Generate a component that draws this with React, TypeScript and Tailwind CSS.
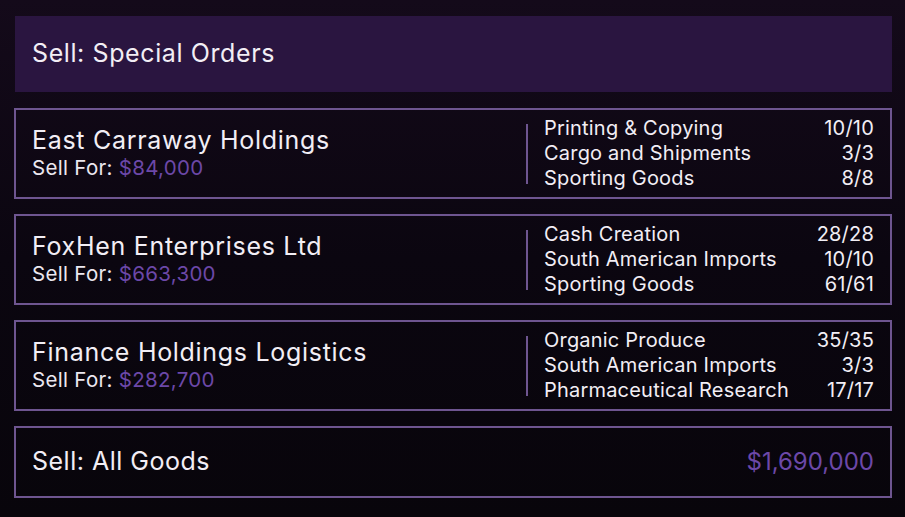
const orders = [
  {
    name: "East Carraway Holdings",
    price: "$84,000",
    goods: [
      ["Printing & Copying", "10/10"],
      ["Cargo and Shipments", "3/3"],
      ["Sporting Goods", "8/8"],
    ],
  },
  {
    name: "FoxHen Enterprises Ltd",
    price: "$663,300",
    goods: [
      ["Cash Creation", "28/28"],
      ["South American Imports", "10/10"],
      ["Sporting Goods", "61/61"],
    ],
  },
  {
    name: "Finance Holdings Logistics",
    price: "$282,700",
    goods: [
      ["Organic Produce", "35/35"],
      ["South American Imports", "3/3"],
      ["Pharmaceutical Research", "17/17"],
    ],
  },
];

function OrderCard({ name, price, goods }: { name: string; price: string; goods: string[][] }) {
  return (
    <div className="flex h-[91px] items-center border-2 border-[#6e5590] pl-[16px] pr-[16px]">
      <div className="flex-1">
        <div className="text-[25px] leading-[26px] tracking-[0.7px] text-[#f2eef5]">{name}</div>
        <div className="mt-[2px] text-[20.5px] leading-[25px] tracking-[0.3px] text-[#ece8f0]">
          Sell For: <span className="text-[#6c48a8]">{price}</span>
        </div>
      </div>
      <div className="h-[60px] w-[2px] bg-[#6e5590]" />
      <div className="ml-[16px] w-[330px]">
        {goods.map(([label, count]) => (
          <div key={label} className="flex justify-between text-[20px] leading-[25.3px] tracking-[0.2px] text-[#f2eef5]">
            <span>{label}</span>
            <span>{count}</span>
          </div>
        ))}
      </div>
    </div>
  );
}

export default function App() {
  return (
    <div
      className="h-[517px] w-[905px] overflow-hidden bg-gradient-to-b from-[#140a1a] via-[#0b0610] to-[#08050b] pl-[14px] pt-[16px]"
      style={{ fontFamily: "Inter, 'Liberation Sans', sans-serif" }}
    >
      <div className="w-[878px]">
        <div className="ml-px flex h-[76px] items-center bg-[#2a1540] pl-[17px] text-[25px] tracking-[0.6px] text-[#f2eef5]">
          Sell: Special Orders
        </div>
        <div className="mt-[16px] flex flex-col gap-[15px]">
          {orders.map((o) => (
            <OrderCard key={o.name} {...o} />
          ))}
          <div className="flex h-[72px] items-center justify-between border-2 border-[#6e5590] pl-[16px] pr-[16px] text-[25px] tracking-[0.5px]">
            <span className="text-[#f2eef5]">Sell: All Goods</span>
            <span className="text-[24px] tracking-[0px] text-[#6c48a8]">$1,690,000</span>
          </div>
        </div>
      </div>
    </div>
  );
}
